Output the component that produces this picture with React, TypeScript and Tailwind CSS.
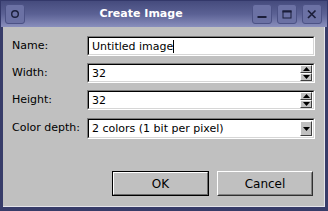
import React from "react";

function Sunken({ className = "", children }: { className?: string; children?: React.ReactNode }) {
  return (
    <div className={"flex-1 h-full border border-t-[#7c7c7c] border-l-[#7c7c7c] border-b-white border-r-white " + className}>
      <div className="h-full border border-t-black border-l-black border-b-[#d6d6d6] border-r-[#d6d6d6] bg-white flex items-center">
        {children}
      </div>
    </div>
  );
}

function Tri({ up }: { up?: boolean }) {
  return (
    <svg width="7" height="4" viewBox="0 0 7 4">
      {up ? <polygon points="0,4 7,4 3.5,0" fill="#000" /> : <polygon points="0,0 7,0 3.5,4" fill="#000" />}
    </svg>
  );
}

function SpinHalf({ up }: { up?: boolean }) {
  return (
    <div className="h-[8px] w-[12px] bg-[#c0c0c0] border border-t-white border-l-white border-b-[#404040] border-r-[#404040] flex items-center justify-center">
      <Tri up={up} />
    </div>
  );
}

function SpinField({ value }: { value: string }) {
  return (
    <Sunken>
      <span className="pl-[3px] text-black leading-none">{value}</span>
      <div className="ml-auto mr-[1px] flex flex-col">
        <SpinHalf up />
        <SpinHalf />
      </div>
    </Sunken>
  );
}

function TitleBtn({ children }: { children: React.ReactNode }) {
  return (
    <div className="w-[20px] h-[20px] rounded-[3px] border border-[#4c5285] bg-[#6b71a4] flex items-center justify-center shrink-0">
      {children}
    </div>
  );
}

export default function App() {
  return (
    <div className="w-[328px] h-[211px] bg-[#373c69] flex flex-col font-['DejaVu_Sans',sans-serif] text-[11px] select-none">
      <div className="h-[27px] shrink-0 flex items-center pl-[4px] pr-[5px] bg-linear-to-b from-[#454b7d] via-[#5b6194] to-[#8a8fbd] border-t border-x border-[#33386a]">
        <TitleBtn>
          <svg width="18" height="18" viewBox="0 0 18 18">
            <circle cx="9" cy="9" r="3.3" fill="none" stroke="#1b1e3a" strokeWidth="1.4" />
          </svg>
        </TitleBtn>
        <div className="flex-1 text-center pl-[5px] text-white font-bold text-[11px]">Create Image</div>
        <div className="flex gap-[5px]">
          <TitleBtn>
            <svg width="18" height="18" viewBox="0 0 18 18">
              <rect x="4.5" y="11" width="9" height="2" fill="#1b1e3a" />
            </svg>
          </TitleBtn>
          <TitleBtn>
            <svg width="18" height="18" viewBox="0 0 18 18">
              <rect x="5" y="6" width="8" height="7" fill="none" stroke="#1b1e3a" strokeWidth="1" />
              <rect x="4.5" y="5.5" width="9" height="2" fill="#1b1e3a" />
            </svg>
          </TitleBtn>
          <TitleBtn>
            <svg width="18" height="18" viewBox="0 0 18 18">
              <path d="M5 5.5 L12.5 13 M12.5 5.5 L5 13" stroke="#1b1e3a" strokeWidth="1.7" />
            </svg>
          </TitleBtn>
        </div>
      </div>

      <div className="flex-1 mx-[3px] mb-[4px] bg-[#c0c0c0] border-r border-b border-[#e4e4ea] flex flex-col pl-[9px] pr-[9px] pt-[9px] text-black">
        <div className="h-[20px] flex items-center">
          <div className="w-[75px] shrink-0">Name:</div>
          <Sunken>
            <span className="pl-[3px] leading-none">Untitled image</span>
            <span className="w-[1px] h-[13px] bg-black"></span>
          </Sunken>
        </div>
        <div className="h-[20px] mt-[7px] flex items-center">
          <div className="w-[75px] shrink-0">Width:</div>
          <SpinField value="32" />
        </div>
        <div className="h-[20px] mt-[7px] flex items-center">
          <div className="w-[75px] shrink-0">Height:</div>
          <SpinField value="32" />
        </div>
        <div className="h-[21px] mt-[8px] flex items-center">
          <div className="w-[75px] shrink-0">Color depth:</div>
          <Sunken>
            <span className="pl-[3px] leading-none">2 colors (1 bit per pixel)</span>
            <div className="ml-auto mr-[1px] w-[12px] h-[15px] bg-[#c0c0c0] border border-t-white border-l-white border-b-[#404040] border-r-[#404040] flex items-center justify-center">
              <Tri />
            </div>
          </Sunken>
        </div>
        <div className="mt-[32px] flex justify-end gap-[8px] pr-[2px]">
          <div className="w-[97px] h-[25px] border border-black">
            <div className="h-full bg-[#c0c0c0] border border-t-white border-l-white border-b-[#6a6a6a] border-r-[#6a6a6a] flex items-center justify-center text-[12px]">
              OK
            </div>
          </div>
          <div className="w-[96px] h-[25px] bg-[#c0c0c0] border border-t-white border-l-white border-b-[#303030] border-r-[#303030]">
            <div className="h-full border border-transparent border-b-[#808080] border-r-[#808080] flex items-center justify-center text-[12px]">
              Cancel
            </div>
          </div>
        </div>
      </div>
    </div>
  );
}
